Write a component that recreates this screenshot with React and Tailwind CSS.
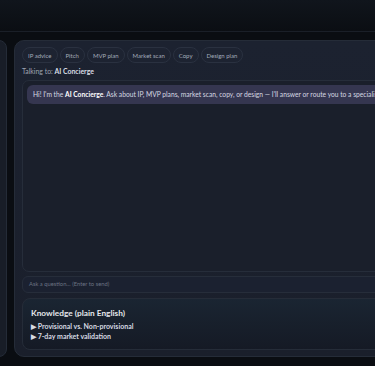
import React from "react";

const chips = ["IP advice", "Pitch", "MVP plan", "Market scan", "Copy", "Design plan"];

export default function App() {
  return (
    <div
      className="w-[375px] h-[366px] overflow-hidden bg-[#0a0d12] flex flex-col"
      style={{ fontFamily: "Lato, 'Noto Sans', 'Liberation Sans', sans-serif" }}
    >
      <div className="h-[32px] shrink-0 bg-gradient-to-b from-[#10151c] to-[#0b0e13] border-b border-[#1a1f28]" />
      <div className="flex gap-[7px] pt-[8px]">
        <div className="w-[40px] -ml-[33px] h-[317px] shrink-0 rounded-[8px] bg-[#181d27] border border-[#242b37]" />
        <div className="w-[400px] h-[317px] shrink-0 rounded-[10px] bg-gradient-to-b from-[#1c2230] to-[#1a1f2b] border border-[#252c38] px-[7px] pt-[6px] flex flex-col">
          <div className="flex gap-[2px]">
            {chips.map((c) => (
              <div
                key={c}
                className="h-[16px] px-[5px] flex items-center rounded-full border border-[#2a3140] bg-[#1d2331] text-[6px] text-[#a3abb9]"
              >
                {c}
              </div>
            ))}
          </div>
          <div className="mt-[3px] text-[6.9px] leading-[10px] text-[#9ca3af]">
            Talking to: <span className="font-bold text-[#d8dce4]">AI Concierge</span>
          </div>
          <div className="mt-[4px] h-[192px] rounded-[7px] border border-[#262d3a] bg-[#1a1f2b] p-[4px]">
            <div className="h-[19px] flex items-center rounded-[6px] bg-[#353650] px-[6px] text-[6.7px] text-[#d6d9e2] whitespace-nowrap">
              Hi! I'm the&nbsp;<span className="font-bold text-white">AI Concierge</span>. Ask about IP, MVP plans, market scan, copy, or design — I'll answer or route you to a specialist.
            </div>
          </div>
          <div className="mt-[4px] h-[17px] flex items-center rounded-[6px] border border-[#262d3a] bg-[#1b2130] px-[6px] text-[5.8px] text-[#6b7383]">
            Ask a question… (Enter to send)
          </div>
          <div className="mt-[5px] h-[52px] rounded-[8px] border border-[#252c38] bg-gradient-to-b from-[#1a2532] to-[#151a25] px-[8px] pt-[8px]">
            <div className="text-[8.3px] leading-[12px] font-bold text-[#e5e7eb]">Knowledge (plain English)</div>
            <div className="mt-[2px] text-[7px] leading-[10px] font-bold text-[#d6dae2]">▶ Provisional vs. Non-provisional</div>
            <div className="text-[7px] leading-[10px] font-bold text-[#d6dae2]">▶ 7-day market validation</div>
          </div>
        </div>
      </div>
    </div>
  );
}
